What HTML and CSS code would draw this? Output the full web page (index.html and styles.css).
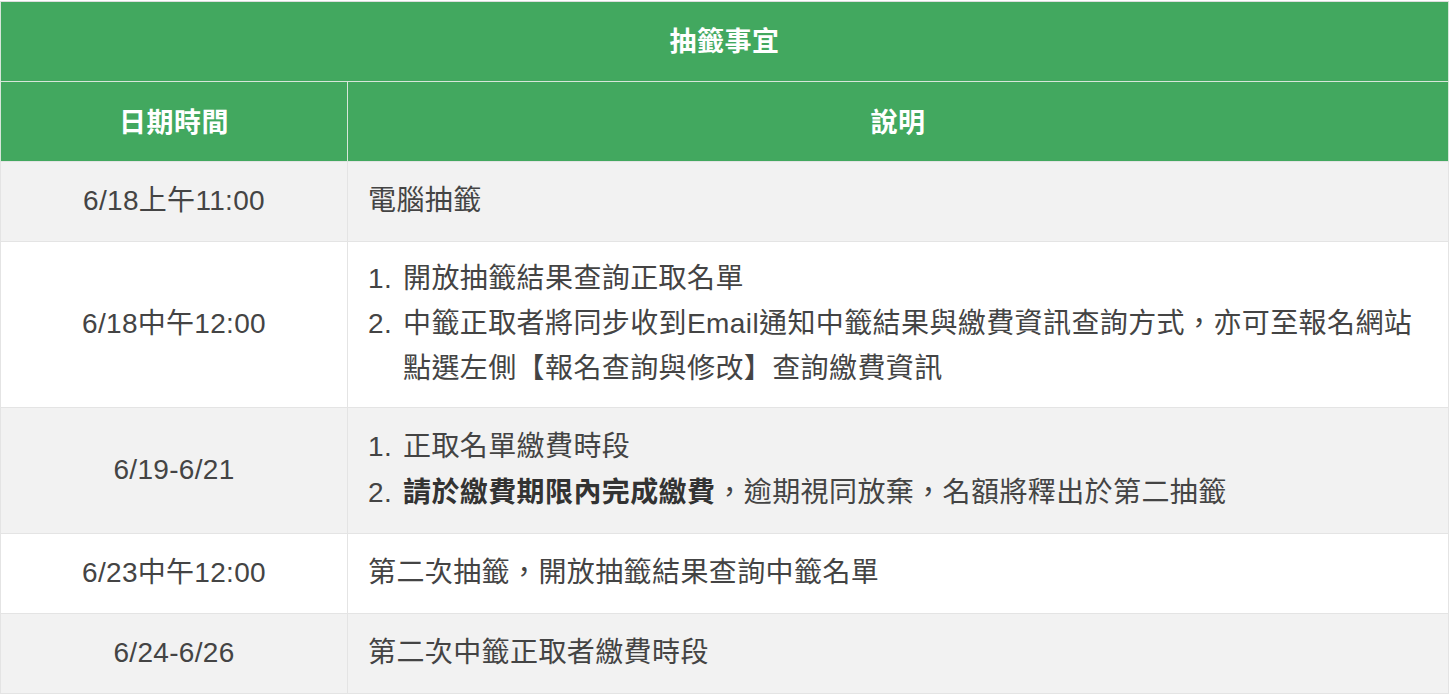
FILE: index.html
```html
<!DOCTYPE html>
<html lang="zh-Hant">
<head>
<meta charset="utf-8">
<title>抽籤事宜</title>
<link rel="stylesheet" href="styles.css">
</head>
<body>
<table class="schedule">
  <colgroup>
    <col class="col-date">
    <col class="col-desc">
  </colgroup>
  <thead>
    <tr class="head-row">
      <th colspan="2">抽籤事宜</th>
    </tr>
    <tr class="head-row">
      <th>日期時間</th>
      <th>說明</th>
    </tr>
  </thead>
  <tbody>
    <tr class="odd">
      <td class="date">6/18上午11:00</td>
      <td class="desc">電腦抽籤</td>
    </tr>
    <tr class="even">
      <td class="date">6/18中午12:00</td>
      <td class="desc">
        <ol class="steps tight">
          <li><span class="num">1.</span><span class="txt">開放抽籤結果查詢正取名單</span></li>
          <li><span class="num">2.</span><span class="txt">中籤正取者將同步收到Email通知中籤結果與繳費資訊查詢方式，亦可至報名網站點選左側【報名查詢與修改】查詢繳費資訊</span></li>
        </ol>
      </td>
    </tr>
    <tr class="odd">
      <td class="date">6/19-6/21</td>
      <td class="desc">
        <ol class="steps">
          <li><span class="num">1.</span><span class="txt">正取名單繳費時段</span></li>
          <li><span class="num">2.</span><span class="txt"><strong>請於繳費期限內完成繳費</strong>，逾期視同放棄，名額將釋出於第二抽籤</span></li>
        </ol>
      </td>
    </tr>
    <tr class="even">
      <td class="date">6/23中午12:00</td>
      <td class="desc">第二次抽籤，開放抽籤結果查詢中籤名單</td>
    </tr>
    <tr class="odd">
      <td class="date">6/24-6/26</td>
      <td class="desc">第二次中籤正取者繳費時段</td>
    </tr>
  </tbody>
</table>
</body>
</html>
```

FILE: styles.css
```css
html, body {
  margin: 0;
  padding: 0;
  background: #ffffff;
}

body {
  padding-top: 1px;
  font-family: "Liberation Sans", "Noto Sans CJK TC", sans-serif;
  color: #444444;
}

.schedule {
  width: 1449px;
  border-collapse: collapse;
  border: 1px solid #dddddd;
  table-layout: fixed;
  font-size: 28px;
}

.col-date {
  width: 347px;
}

.head-row th {
  background: #42a85f;
  color: #ffffff;
  font-weight: bold;
  font-size: 27px;
  letter-spacing: 0.5px;
  height: 74px;
  padding: 0 0 5px 0;
  text-align: center;
  vertical-align: middle;
  border: 1px solid #d7e6da;
  border-top: none;
}

.head-row:last-child th {
  border-bottom: none;
  height: 76px;
  padding-bottom: 3px;
}

.schedule td {
  padding: 16px 20px 17px;
  line-height: 46px;
  vertical-align: middle;
  border: 1px solid #e4e4e4;
}

.odd td {
  background: #f2f2f2;
}

.even td {
  background: #ffffff;
}

.date {
  text-align: center;
  letter-spacing: 0.3px;
}

.desc {
  text-align: left;
  letter-spacing: 0.4px;
}

.steps {
  list-style: none;
  margin: 0;
  padding: 0;
  line-height: 46px;
}

.steps.tight {
  line-height: 45px;
  margin: -2px 0 -1px;
}

.steps li {
  display: flex;
  align-items: baseline;
}

.steps .num {
  flex: 0 0 35px;
}

.steps .txt {
  flex: 1 1 auto;
  min-width: 0;
}

.steps strong {
  color: #333333;
  font-weight: bold;
}
```
